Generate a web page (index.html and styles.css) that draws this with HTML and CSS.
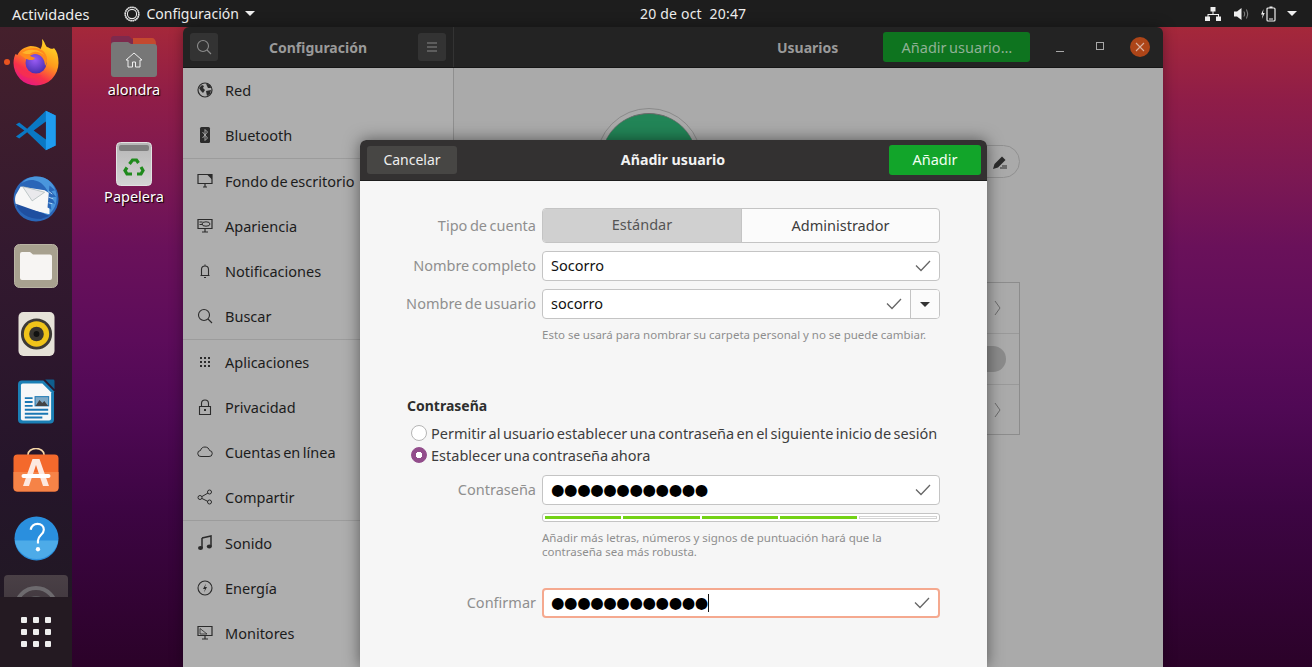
FILE: index.html
```html
<!DOCTYPE html>
<html lang="es">
<head>
<meta charset="utf-8">
<title>Configuración</title>
<link rel="stylesheet" href="styles.css">
</head>
<body>
<div class="desktop">
  <header class="topbar">
    <div class="tb-left">
      <span class="tb-act">Actividades</span>
      <span class="tb-app">
        <svg class="tb-gear" viewBox="0 0 16 16" width="16" height="16"><circle cx="8" cy="8" r="6.800" fill="none" stroke="#e8e8e8" stroke-width="1.600" stroke-dasharray="1.800 .33"/><circle cx="8" cy="8" r="4.600" fill="none" stroke="#e8e8e8" stroke-width="1.100"/></svg>
        <span class="tb-name">Configuración</span> <i class="caret"></i>
      </span>
    </div>
    <div class="tb-clock">20 de oct&nbsp; 20:47</div>
    <div class="tb-right">
      <svg class="tb-net" width="16" height="14" viewBox="0 0 16 14"><path d="M5.500 0h5v4.500h-5zM0 9.500h5V14H0zM11 9.500h5V14h-5zM7.500 4.500h1v2.500h5.500v2.500h-1V8H3.500v1.500h-1V7h5z" fill="#eee"/></svg>
      <svg width="16" height="14" viewBox="0 0 16 14"><path d="M0 4.500h3L7.500 1v12L3 9.500H0z" fill="#eee"/><path d="M10 4.500q1.500 2.500 0 5M12.500 2.500q2.500 4.500 0 9" fill="none" stroke="#888" stroke-width="1"/></svg>
      <svg width="15" height="16" viewBox="0 0 15 16"><path d="M2.500 3 0 8.500h1.700L.9 13l2.800-6H2z" fill="#eee"/><rect x="6" y="2" width="8" height="13" rx="1" fill="none" stroke="#eee" stroke-width="1.200"/><rect x="8.500" y=".5" width="3" height="1.500" fill="#eee"/><rect x="8" y="12.500" width="4" height="1" fill="#eee"/></svg>
      <i class="caret caret-r"></i>
    </div>
  </header>

  <nav class="dock">
    <div class="dock-apps">
      <div class="dock-item running">
        <svg width="46" height="47" viewBox="0 0 46 47">
          <defs>
            <linearGradient id="ffa" x1="0.8" y1="0" x2="0.25" y2="1"><stop offset="0" stop-color="#ffdf28"/><stop offset=".42" stop-color="#ff9a1c"/><stop offset=".72" stop-color="#f8324a"/><stop offset="1" stop-color="#e3158a"/></linearGradient>
            <radialGradient id="ffb" cx=".45" cy=".35" r=".65"><stop offset="0" stop-color="#9a5cf5"/><stop offset="1" stop-color="#4a2fb0"/></radialGradient>
          </defs>
          <path d="M29 0c3 3 3 6 5 8 3 1 5 3 7 1 3 3 4.500 8 4.500 15a22.500 22.500 0 1 1-45 0c0-4 1-7 2-9l2 1c2-5 7-8 13-9 4 0 8 1 10 3 2-3 2-7 1.500-10z" fill="url(#ffa)"/>
          <circle cx="23" cy="24" r="10.500" fill="url(#ffb)"/>
          <path d="M6 15c4-4 9-6 15-6 5 0 10 2 12 7 2 4 1 8-1 11 0-7-4-12-10-12-2 0-4 1-5 2l5 2c-1 3-6 2-9 1-3-2-5-4-7-5z" fill="#ff8a1c"/>
          <path d="M9 14c4-3 8-4 12-3 4 0 8 2 10 5-3-2-7-4-10-3-2 0-3 1-4 2-3 0-5 0-8-1z" fill="#ffb42a"/>
          <path d="M2 24c2 9 7 14 15 15 5 1 9-1 12-3-5 1-12 1-17-3-4-3-6-6-10-9z" fill="#f8324a" opacity=".6"/>
        </svg>
      </div>
      <div class="dock-item">
        <svg width="43" height="43" viewBox="0 0 46 46">
          <path d="M33 2 43.500 7v32L33 44 13 25 4.500 31.500 1 29.500 10 23 1 16.500l3.500-2L13 21z" fill="#0a78c4"/>
          <path d="M33 2 43.500 7v32L33 44z" fill="#1f9cf0"/>
          <path d="M33 13.500 20 23l13 9.500z" fill="#3a1c30"/>
        </svg>
      </div>
      <div class="dock-item">
        <svg width="48" height="48" viewBox="0 0 50 50">
          <circle cx="25" cy="26" r="23.500" fill="#2a66b8"/>
          <path d="M10 10C16 1 32 0 40 8c7 7 9 20 3 29-4 6-11 10-16 9 7-4 12-11 12-19 0-8-4-15-11-19-7-3-13-2-18 2z" fill="#4a96dc"/>
          <path d="M9 13l25 4 5 3v22L6 34c-3-2-4-10-1-14z" fill="#f7f7f7"/>
          <path d="M11 13l23 6-13 9z" fill="#e9e9ec" stroke="#9aa" stroke-width=".6"/>
          <path d="M4 31l34 12v1l-8 3C17 47 7 41 4 31z" fill="#1f4fa0"/>
          <path d="M39 12l6 5-4 1 5 6-5 0 4 7-5-1 1 7-4-2z" fill="#2a66b8"/>
          <path d="M38 18l4 3M38 24l5 2M38 30l4 1" stroke="#b7d8f4" stroke-width="1"/>
        </svg>
      </div>
      <div class="dock-item">
        <svg width="44" height="44" viewBox="0 0 44 44"><rect x=".5" y=".5" width="43" height="43" rx="5" fill="#a8a18f" stroke="#bab4a4"/><path d="M6 10a2 2 0 0 1 2-2h8l3 2.500h17a2 2 0 0 1 2 2V34a2 2 0 0 1-2 2H8a2 2 0 0 1-2-2z" fill="#f7f5f3"/></svg>
      </div>
      <div class="dock-item">
        <svg width="37" height="46" viewBox="0 0 38 46"><rect x=".5" y=".5" width="37" height="45" rx="5" fill="#e6e2d8"/><circle cx="19" cy="23" r="16" fill="#3d3a36"/><circle cx="19" cy="23" r="13" fill="#f0c419"/><circle cx="19" cy="23" r="7.500" fill="#3a3630"/><circle cx="19" cy="23" r="3" fill="#111"/></svg>
      </div>
      <div class="dock-item">
        <svg width="37" height="46" viewBox="0 0 38 46"><path d="M4 1h22l11 11v29a4 4 0 0 1-4 4H4a4 4 0 0 1-4-4V5a4 4 0 0 1 4-4z" fill="#1b7fb5"/><path d="M28 0h8a1.500 1.500 0 0 1 1.500 1.500V10z" fill="#0f5f8e"/><path d="M5 4h20l9 9v27a2 2 0 0 1-2 2H5a2 2 0 0 1-2-2V6a2 2 0 0 1 2-2z" fill="#f6f7f8"/><path d="M7 18h8v2H7zM7 22h8v2H7zM7 26h8v2H7zM7 30h24v2H7zM7 34h24v2H7zM7 38h18v2H7z" fill="#1b78b4"/><rect x="17.500" y="17.500" width="14" height="9.500" fill="#7fa9c6" stroke="#1b78b4"/><path d="M18 27l4-6 3 3 2-2 4 5z" fill="#444"/></svg>
      </div>
      <div class="dock-item">
        <svg width="46" height="44" viewBox="0 0 46 44"><path d="M15 9V6.500a8 6 0 0 1 16 0V9" fill="none" stroke="#f5d6a6" stroke-width="1.600"/><rect x=".5" y="6.500" width="45" height="37" rx="4" fill="#f4692c"/><path d="M.5 24h45v15.500a4 4 0 0 1-4 4H4.500a4 4 0 0 1-4-4z" fill="#f68347"/><path d="M19.500 11h7L36 38h-6l-7-21-7 21h-6z" fill="#fde9e0"/><rect x="8.500" y="26" width="29" height="4" rx="2" fill="#fff"/></svg>
      </div>
      <div class="dock-item">
        <svg width="45" height="45" viewBox="0 0 46 46"><circle cx="23" cy="23" r="22.500" fill="#2a8fde"/><path d="M.8 25h44.400A22.500 22.500 0 0 1 .8 25z" fill="#4dabe8"/><path d="M17 14c1-4 4-6 7-6 4 0 6.500 2.500 6.500 6 0 5-6 6-6 11v3" fill="none" stroke="#fff" stroke-width="2.200"/><circle cx="24.500" cy="34" r="2.200" fill="#fff"/></svg>
      </div>
      <div class="dock-item dock-active">
        <svg width="46" height="46" viewBox="0 0 46 46"><circle cx="23" cy="23" r="20" fill="none" stroke="#6d6a6e" stroke-width="4"/><circle cx="23" cy="23" r="12" fill="#5a585c"/></svg>
      </div>
    </div>
    <div class="dock-grid">
      <span></span><span></span><span></span><span></span><span></span><span></span><span></span><span></span><span></span>
    </div>
  </nav>

  <div class="desk-icon desk-home">
    <svg width="46" height="42" viewBox="0 0 46 42"><path d="M0 4a3 3 0 0 1 3-3h15l3 3h20a4 4 0 0 1 4 4v6H0z" fill="#7d2a4d"/><path d="M22 3h19c2 0 4 2 4 5v3H22z" fill="#c4492f"/><path d="M0 10a3 3 0 0 1 3-3h14l3 2h23a3 3 0 0 1 3 3v27a3 3 0 0 1-3 3H3a3 3 0 0 1-3-3z" fill="#777"/><path d="M23 18l-8 7h2v7h4.500v-5h3v5H29v-7h2z" fill="none" stroke="#eee" stroke-width="1"/></svg>
    <span>alondra</span>
  </div>
  <div class="desk-icon desk-trash">
    <svg width="36" height="44" viewBox="0 0 36 44"><defs><linearGradient id="tr" x1="0" y1="0" x2="0" y2="1"><stop offset="0" stop-color="#b6b6b6"/><stop offset="1" stop-color="#d4d4d4"/></linearGradient></defs><rect width="35" height="43" x=".5" y=".5" rx="4" fill="url(#tr)" stroke="#e2e2e2"/><rect x="3" y="3" width="30" height="6" rx="2" fill="#808080"/><g fill="none" stroke="#1f8a1c" stroke-width="3.200"><path d="M13.500 22l3-4h4l2 3"/><path d="M25 25l2 3.500-2 3.500h-4"/><path d="M16 32h-5l-2-3.500 2-3"/></g></svg>
    <span>Papelera</span>
  </div>

  <section class="window">
    <div class="win-head">
      <div class="head-side">
        <span class="head-btn"><svg width="16" height="16" viewBox="0 0 16 16"><circle cx="7" cy="7" r="5.500" fill="none" stroke="#8c8c8c" stroke-width="1.100"/><path d="M11 11l4 4" stroke="#8c8c8c" stroke-width="1.100"/></svg></span>
        <strong class="head-title">Configuración</strong>
        <span class="head-btn"><svg width="12" height="10" viewBox="0 0 12 10"><path d="M1 1h10M1 5h10M1 9h10" stroke="#888" stroke-width="1"/></svg></span>
      </div>
      <div class="head-main">
        <strong class="head-users">Usuarios</strong>
        <span class="add-user">Añadir usuario…</span>
        <div class="win-ctrl">
          <svg width="14" height="14" viewBox="0 0 14 14"><path d="M1 11.500h8" stroke="#a8a8a8"/></svg>
          <svg width="14" height="14" viewBox="0 0 14 14"><rect x="3.500" y="2.500" width="7" height="7" fill="none" stroke="#a8a8a8"/></svg>
          <span class="close-btn"><svg width="10" height="10" viewBox="0 0 10 10"><path d="M1 1l8 8M9 1l-8 8" stroke="#d8b0a0" stroke-width="1.100"/></svg></span>
        </div>
      </div>
    </div>
    <div class="win-body">
      <aside class="sidebar">
        <div class="side-row"><svg viewBox="0 0 16 16"><circle cx="8" cy="8" r="7" fill="none" stroke="#2b2b2b" stroke-width="1.200"/><path d="M2 6l3-3 2 1-1 2 2 2-2 3-2-2zM9 1.500l4 1.500 1 3-3 0-1-2zM9 9l5-1-1 4-3 2z" fill="#2b2b2b"/></svg>Red</div>
        <div class="side-row side-sep"><svg viewBox="0 0 16 16"><rect x="3" width="10" height="16" rx="1.500" fill="#2b2b2b"/><path d="M5.500 5l5 6L8 13.500v-11L10.500 5l-5 6" fill="none" stroke="#aeaeae" stroke-width=".9"/></svg>Bluetooth</div>
        <div class="side-row"><svg viewBox="0 0 16 16"><path d="M1 1.500h14v9H1zM6 14h4M8 10.500V14" fill="none" stroke="#2b2b2b" stroke-width="1.200"/><path d="M10 1.500h5v5z" fill="#2b2b2b"/></svg>Fondo de escritorio</div>
        <div class="side-row"><svg viewBox="0 0 16 16"><path d="M1 1.500h14v9H1zM5 14h6M8 10.500V14" fill="none" stroke="#2b2b2b" stroke-width="1.200"/><ellipse cx="9" cy="6" rx="4" ry="2.200" fill="none" stroke="#2b2b2b"/><path d="M2.500 3.500h3v1h-3zM2.500 6h3v1h-3z" fill="#2b2b2b"/></svg>Apariencia</div>
        <div class="side-row"><svg viewBox="0 0 16 16"><path d="M3.500 12.500h9M4.500 12.500V6.500a3.500 3.500 0 0 1 7 0v6M7 14.500h2M8 1.500v1.500" fill="none" stroke="#2b2b2b" stroke-width="1.100"/></svg>Notificaciones</div>
        <div class="side-row side-sep"><svg viewBox="0 0 16 16"><circle cx="7" cy="7" r="5.500" fill="none" stroke="#2b2b2b" stroke-width="1.100"/><path d="M11 11l4 4" stroke="#2b2b2b" stroke-width="1.100"/></svg>Buscar</div>
        <div class="side-row"><svg viewBox="0 0 16 16"><path d="M3 3h2v2H3zM7 3h2v2H7zM11 3h2v2h-2zM3 7h2v2H3zM7 7h2v2H7zM11 7h2v2h-2zM3 11h2v2H3zM7 11h2v2H7zM11 11h2v2h-2z" fill="#2b2b2b"/></svg>Aplicaciones</div>
        <div class="side-row"><svg viewBox="0 0 16 16"><path d="M2.500 7.500h11v8h-11zM4.500 7.500V4.500a3.500 3.500 0 0 1 7 0v3" fill="none" stroke="#2b2b2b" stroke-width="1.100"/><rect x="7" y="10" width="2" height="2" fill="#2b2b2b"/></svg>Privacidad</div>
        <div class="side-row"><svg viewBox="0 0 16 16"><path d="M4 12.500a3 3 0 0 1-.5-6C4 4 6 3 8 3c2.500 0 4 1.500 4.500 3.500a3 3 0 0 1-.5 6z" fill="none" stroke="#2b2b2b" stroke-width="1"/></svg>Cuentas en línea</div>
        <div class="side-row side-sep"><svg viewBox="0 0 16 16"><g fill="none" stroke="#2b2b2b" stroke-width="1"><circle cx="3" cy="8.500" r="2"/><circle cx="12.500" cy="3" r="2"/><circle cx="12.500" cy="13" r="2"/><path d="M5 7.500l6-3.500M5 9.500l6 3"/></g></svg>Compartir</div>
        <div class="side-row"><svg viewBox="0 0 16 16"><path d="M5 3l9-2v10.500" fill="none" stroke="#2b2b2b" stroke-width="1.500"/><path d="M5 3v10" stroke="#2b2b2b" stroke-width="1.500"/><ellipse cx="3.500" cy="13" rx="2.500" ry="2" fill="#2b2b2b"/><ellipse cx="12.300" cy="11.500" rx="2.500" ry="2" fill="#2b2b2b"/></svg>Sonido</div>
        <div class="side-row"><svg viewBox="0 0 16 16"><circle cx="8" cy="8" r="7" fill="none" stroke="#2b2b2b" stroke-width="1.100"/><path d="M9 3.500l-3 5.500h2l-1 3.500 3-5.500H8z" fill="#2b2b2b"/></svg>Energía</div>
        <div class="side-row"><svg viewBox="0 0 16 16"><path d="M1 1.500h14v9H1zM5 14h6M8 10.500V14" fill="none" stroke="#2b2b2b" stroke-width="1.200"/><path d="M3 3.500l7 5.500H3z" fill="none" stroke="#2b2b2b" stroke-width=".8"/></svg>Monitores</div>
      </aside>
      <main class="content">
        <div class="user-col">
          <div class="user-top">
            <div class="avatar"><div class="avatar-in"></div></div>
            <span class="edit-pill"><svg width="16" height="16" viewBox="0 0 16 16"><path d="M1 15l1.500-5L10 2.500l3.500 3.500L6 13.500z" fill="#2b2b2b"/><path d="M8 14h7M10 12h5" stroke="#2b2b2b"/></svg></span>
          </div>
          <div class="user-list">
            <div class="list-row"><svg width="8" height="16" viewBox="0 0 8 16"><path d="M1 1l5 7-5 7" fill="none" stroke="#6a6a6a"/></svg></div>
            <div class="list-row"><span class="switch"></span></div>
            <div class="list-row"><svg width="8" height="16" viewBox="0 0 8 16"><path d="M1 1l5 7-5 7" fill="none" stroke="#6a6a6a"/></svg></div>
          </div>
        </div>
      </main>
    </div>
  </section>

  <section class="dialog">
    <div class="dlg-head">
      <span class="dlg-cancel">Cancelar</span>
      <strong class="dlg-title">Añadir usuario</strong>
      <span class="dlg-add">Añadir</span>
    </div>
    <div class="dlg-body">
      <div class="form-row form-row-seg">
        <label class="flabel">Tipo de cuenta</label>
        <div class="seg"><span class="seg-on">Estándar</span><span class="seg-off">Administrador</span></div>
      </div>
      <div class="form-row">
        <label class="flabel">Nombre completo</label>
        <div class="entry"><span class="val">Socorro</span><svg class="chk" width="16" height="12" viewBox="0 0 16 12"><path d="M1 5.500l5 5L15 1" fill="none" stroke="#666" stroke-width="1.300"/></svg></div>
      </div>
      <div class="form-row">
        <label class="flabel">Nombre de usuario</label>
        <div class="entry entry-combo"><span class="val">socorro</span><svg class="chk" width="16" height="12" viewBox="0 0 16 12"><path d="M1 5.500l5 5L15 1" fill="none" stroke="#666" stroke-width="1.300"/></svg><span class="combo-btn"><i class="caret caret-dark"></i></span></div>
      </div>
      <p class="hint hint-user">Esto se usará para nombrar su carpeta personal y no se puede cambiar.</p>
      <h2 class="pw-title">Contraseña</h2>
      <div class="radio-row radio-first"><i class="radio"></i>Permitir al usuario establecer una contraseña en el siguiente inicio de sesión</div>
      <div class="radio-row"><i class="radio radio-on"></i>Establecer una contraseña ahora</div>
      <div class="form-row form-row-pw">
        <label class="flabel">Contraseña</label>
        <div class="entry"><span class="dots">●●●●●●●●●●●●</span><svg class="chk" width="16" height="12" viewBox="0 0 16 12"><path d="M1 5.500l5 5L15 1" fill="none" stroke="#666" stroke-width="1.300"/></svg></div>
      </div>
      <div class="strength"><i class="lvl"></i><i class="lvl"></i><i class="lvl"></i><i class="lvl"></i><i class="lvl lvl-off"></i></div>
      <p class="hint hint-pw">Añadir más letras, números y signos de puntuación hará que la<br>contraseña sea más robusta.</p>
      <div class="form-row form-row-conf">
        <label class="flabel">Confirmar</label>
        <div class="entry entry-focus"><span class="dots">●●●●●●●●●●●●</span><i class="cursor"></i><svg class="chk" width="16" height="12" viewBox="0 0 16 12"><path d="M1 5.500l5 5L15 1" fill="none" stroke="#666" stroke-width="1.300"/></svg></div>
      </div>
    </div>
  </section>
</div>
</body>
</html>
```
FILE: styles.css
```css
* { box-sizing: border-box; }
html, body { margin: 0; padding: 0; height: 100%; overflow: hidden; }
body { font-family: "Noto Sans", sans-serif; font-size: 14.500px; word-spacing: -1.200px; }
.desktop {
  position: relative; width: 1312px; height: 667px; overflow: hidden;
  background: linear-gradient(180deg, #a5283a 4%, #8f1d48 15%, #7b1853 27%, #6a115a 37%, #5c0c5a 51%, #500955 61%, #3d0543 76%, #2b0229 100%);
}
.topbar {
  position: absolute; inset: 0 0 auto 0; height: 27px; background: #1d1d1d; color: #eeeeee;
  display: grid; grid-template-columns: 628px auto 1fr; align-items: center; padding: 0 15px 0 12px; word-spacing: 0;
}
.tb-left { display: flex; align-items: center; gap: 35px; }
.tb-app { display: flex; align-items: center; gap: 6px; }
.tb-name { font-size: 14px; }
.tb-gear { display: block; }
.tb-clock { font-size: 14px; letter-spacing: .2px; }
.tb-right { display: flex; align-items: center; justify-content: flex-end; gap: 11px; }
.tb-net { margin-right: 2px; }
.caret { display: inline-block; width: 0; height: 0; border: 5px solid transparent; border-top: 5px solid #eee; border-bottom: 0; }
.caret-dark { border-top-color: #333; }

.dock {
  position: absolute; left: 0; top: 27px; bottom: 0; width: 72px;
  background: linear-gradient(180deg, #45202c 0%, #33192f 35%, #25152a 70%, #1f1a21 100%);
  display: flex; flex-direction: column; overflow: hidden;
}
.dock-apps { height: 570px; display: flex; flex-direction: column; align-items: center; padding-top: 1px; overflow: hidden; }
.dock-item { position: relative; height: 68px; flex: none; width: 64px; display: flex; align-items: center; justify-content: center; }
.running::before { content: ""; position: absolute; left: 0; top: 31px; width: 6px; height: 6px; border-radius: 50%; background: #e95420; }
.dock-active { margin-top: 3px; background: linear-gradient(180deg, #4a4046, #332b33); border-radius: 4px 4px 0 0; padding-top: 10px; height: 80px; align-items: flex-start; }
.dock-grid {
  flex: 1; background: #241a22; display: grid; grid-template-columns: repeat(3, 6px); grid-auto-rows: 6px; gap: 6px;
  align-content: center; justify-content: center;
}
.dock-grid span { background: #eeeeee; border-radius: 1px; }

.desk-icon { position: absolute; display: flex; flex-direction: column; align-items: center; color: #fff; text-shadow: 1px 1px 1px #000; width: 90px; }
.desk-home { left: 89px; top: 35px; gap: 2px; }
.desk-trash { left: 89px; top: 142px; gap: 0; }

.window { position: absolute; left: 183px; top: 27px; width: 980px; height: 640px; display: flex; flex-direction: column; box-shadow: 0 0 14px rgba(0,0,0,.35); border-radius: 6px 6px 0 0; overflow: hidden; }
.win-head { height: 41px; background: #232323; display: flex; flex: none; border-bottom: 1px solid #161616; }
.head-side { width: 271px; display: flex; align-items: center; justify-content: space-between; padding: 0 7px; border-right: 1px solid #333; flex: none; }
.head-btn { width: 28px; height: 28px; background: #333; border-radius: 3px; display: flex; align-items: center; justify-content: center; }
.head-title, .head-users { color: #9a9a9a; font-weight: 700; font-size: 14px; word-spacing: 0; }
.head-main { flex: 1; display: flex; align-items: center; padding-left: 323px; }
.add-user { margin-left: 45px; width: 147px; height: 30px; background: #0e741f; color: #8fb195; border-radius: 3px; display: flex; align-items: center; justify-content: center; }
.win-ctrl { display: flex; align-items: center; gap: 24px; margin-left: 25px; }
.close-btn { width: 20px; height: 20px; margin-left: -1px; border-radius: 50%; background: #ad4518; display: flex; align-items: center; justify-content: center; }

.win-body { flex: 1; display: flex; min-height: 0; background: #aaaaaa; }
.sidebar { width: 271px; flex: none; background: #aeaeae; border-right: 1px solid #8f8f8f; }
.side-row { height: 45px; display: flex; align-items: center; gap: 12px; padding: 0 0 2px 14px; color: #1c1c1c; white-space: nowrap; }
.side-row svg { width: 16px; height: 16px; flex: none; }
.side-sep { height: 46px; padding-bottom: 1px; border-bottom: 1px solid #9c9c9c; }
.content { flex: 1; display: flex; justify-content: center; padding: 40px 1px 0 0; }
.user-col { width: 424px; display: flex; flex-direction: column; }
.user-top { height: 174px; display: flex; justify-content: space-between; align-items: flex-start; }
.avatar { width: 106px; height: 106px; border-radius: 50%; border: 1px solid #8a8a8a; padding: 4px; }
.avatar-in { width: 100%; height: 100%; border-radius: 50%; background: #228557; border-top: 1px solid #6a6a6a; }
.edit-pill { margin-top: 37px; width: 120px; height: 33px; border: 1px solid #909090; border-radius: 17px; display: flex; align-items: center; justify-content: flex-end; padding-right: 11px; }
.user-list { height: 153px; border: 1px solid #8c8c8c; }
.list-row { height: 51px; display: flex; align-items: center; justify-content: flex-end; padding: 0 17px 1px 0; border-bottom: 1px solid #999; }
.list-row:last-child { border-bottom: 0; }
.switch { width: 60px; height: 26px; border-radius: 13px; background: #8b8b8b; margin-right: -4px; }

.dialog { position: absolute; left: 360px; top: 140px; width: 627px; height: 527px; border-radius: 6px 6px 0 0; overflow: hidden; box-shadow: 0 0 16px rgba(0,0,0,.5); display: flex; flex-direction: column; background: #f6f6f6; }
.dlg-head { height: 41px; flex: none; background: #333131; border-bottom: 1px solid #1d1d1d; display: flex; align-items: center; justify-content: space-between; padding: 0 6px 0 7px; color: #eee; }
.dlg-cancel { width: 90px; height: 28px; background: #474644; border-radius: 3px; display: flex; align-items: center; justify-content: center; font-size: 14px; padding-bottom: 2px; }
.dlg-title { font-weight: 700; font-size: 14.200px; word-spacing: 0; color: #f2f2f2; margin-bottom: 1px; }
.dlg-add { width: 92px; height: 30px; background: #12a52a; border-radius: 3px; color: #f3fff3; display: flex; align-items: center; justify-content: center; padding-bottom: 2px; }
.dlg-body { padding: 27px 47px 0 47px; display: flex; flex-direction: column; }
.form-row { display: grid; grid-template-columns: 129px 398px; column-gap: 6px; align-items: center; margin-bottom: 8px; height: 30px; }
.form-row-seg { height: 35px; }
.flabel { color: #8f8f8f; text-align: right; white-space: nowrap; justify-self: end; padding-bottom: 2px; }
.seg { height: 35px; display: flex; border: 1px solid #c4c4c4; border-radius: 4px; overflow: hidden; background: #fbfbfb; }
.seg-on { width: 198px; background: #d0d0d0; color: #555; display: flex; align-items: center; justify-content: center; padding-bottom: 3px; }
.seg-off { flex: 1; color: #3d3d3d; display: flex; align-items: center; justify-content: center; border-left: 1px solid #c4c4c4; padding-bottom: 2px; }
.entry { height: 30px; background: #fff; border: 1px solid #c4c4c4; border-radius: 4px; display: flex; align-items: center; padding-left: 8px; position: relative; color: #111; }
.val { flex: 1; padding-bottom: 2px; }
.chk { margin-right: 8px; }
.entry-combo .chk { margin-right: 0; }
.combo-btn { width: 29px; height: 28px; margin-left: 8px; border-left: 1px solid #c4c4c4; border-radius: 0 3px 3px 0; background: #fbfbfb; display: flex; align-items: center; justify-content: center; }
.hint { margin: 0; font-size: 11.500px; word-spacing: -.1px; color: #8e8e8e; line-height: 14px; padding-left: 135px; }
.hint-user { margin-top: 1px; height: 14px; }
.pw-title { margin: 54px 0 0 0; font-size: 14px; font-weight: 700; word-spacing: 0; color: #2e2e2e; line-height: 20px; }
.radio-row { display: flex; align-items: center; gap: 4px; color: #3d3d3d; height: 22px; padding-left: 4px; white-space: nowrap; word-spacing: -1.350px; }
.radio-first { margin-top: 6px; }
.radio { width: 16px; height: 16px; border-radius: 50%; border: 1px solid #b5b5b5; background: #fff; flex: none; }
.radio-on { background: radial-gradient(circle, #fff 0 3px, #924d8b 3.500px); border-color: #924d8b; }
.form-row-pw { margin-top: 9px; }
.entry .dots { font-family: "DejaVu Sans", sans-serif; font-size: 15.500px; letter-spacing: -.45px; color: #000; line-height: 1; padding-top: 1px; }
.entry .chk { margin-left: auto; }
.strength { margin-left: 135px; width: 398px; height: 9px; border: 1px solid #c4c4c4; border-radius: 3px; background: #fff; display: flex; gap: 2px; padding: 2px; }
.lvl { flex: 1; background: #73d216; }
.lvl-off { background: #fff; border: 1px solid #d4d4d4; }
.hint-pw { margin-top: 9px; }
.form-row-conf { margin-top: 29px; }
.entry-focus { border: 2px solid #f5a98f; padding-left: 7px; }
.cursor { width: 1px; height: 18px; background: #111; }
```
